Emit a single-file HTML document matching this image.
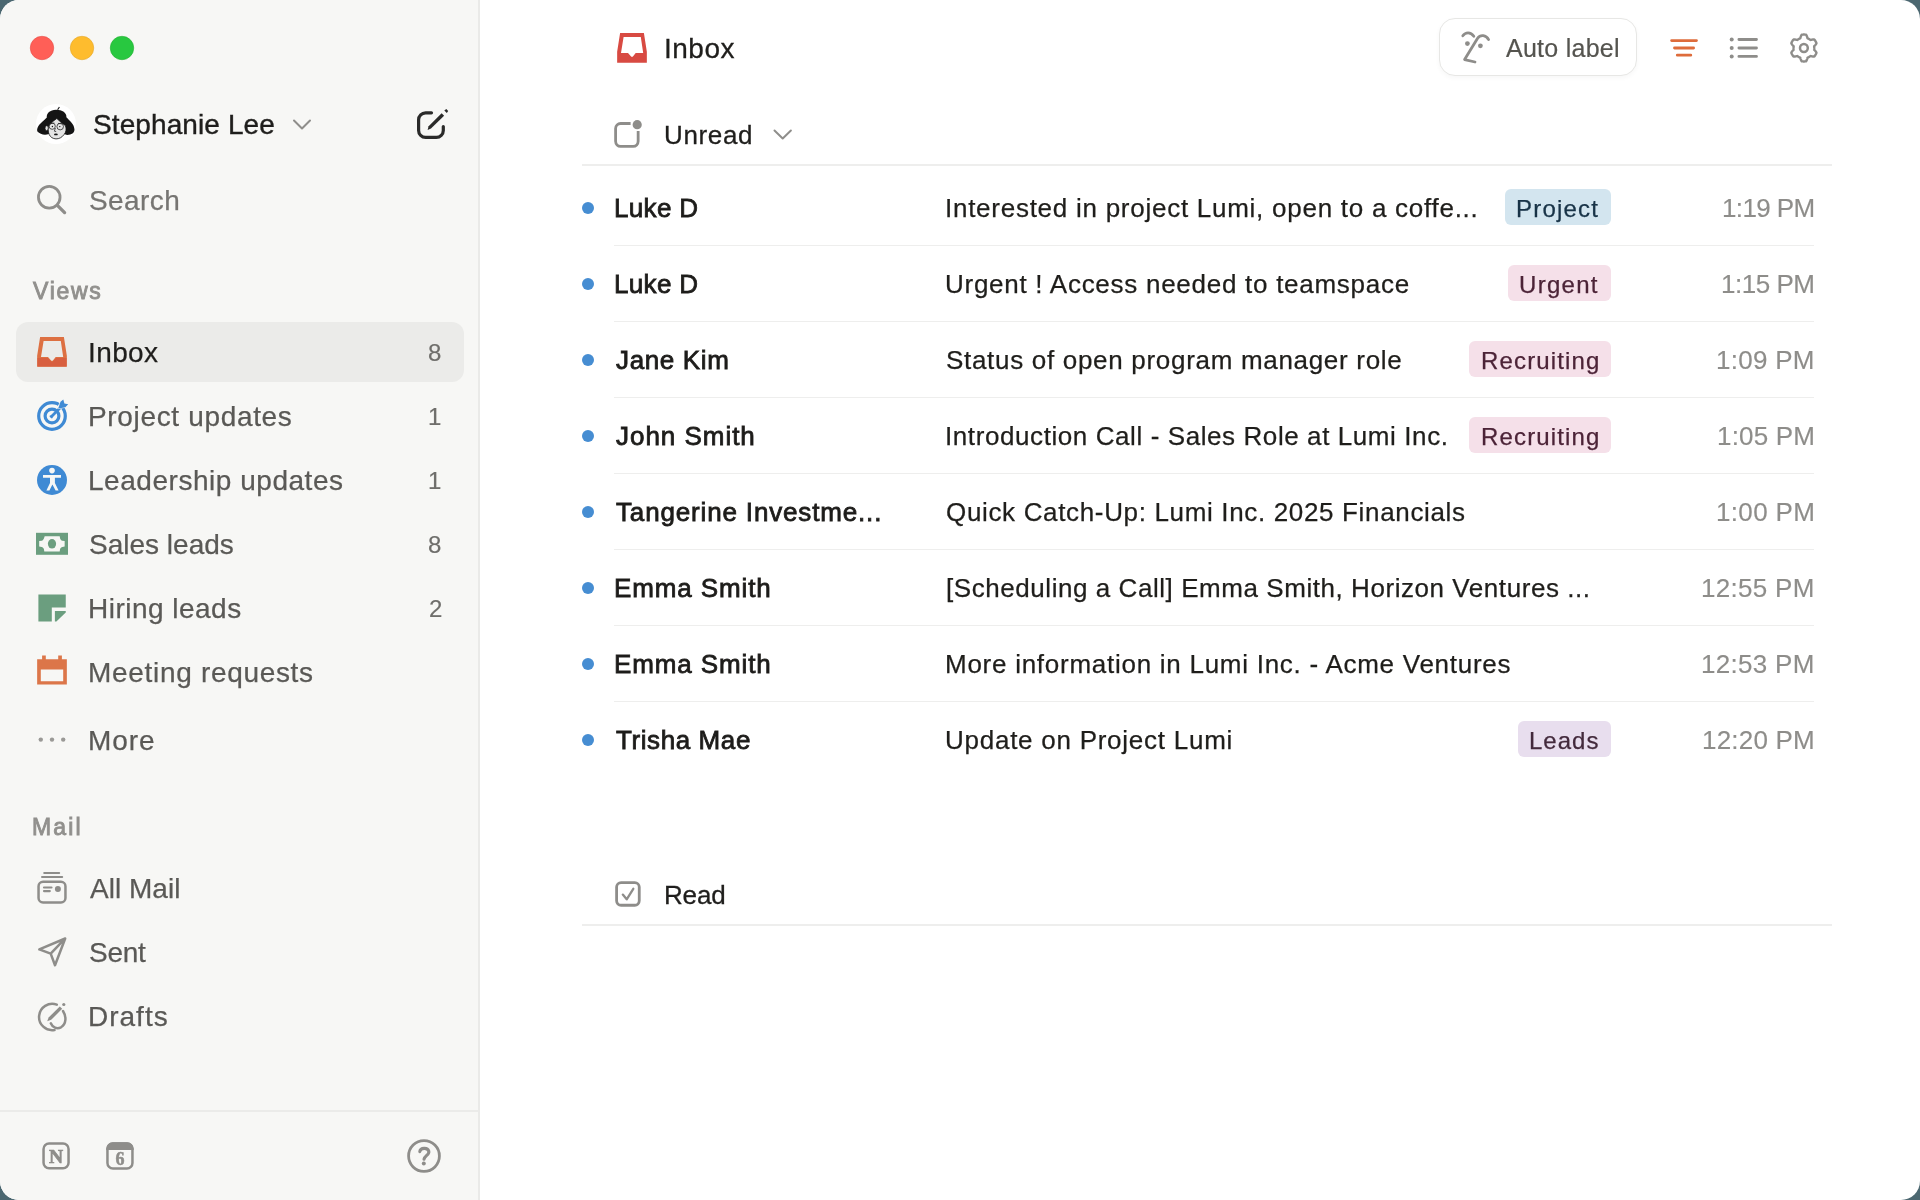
<!DOCTYPE html>
<html><head><meta charset="utf-8"><title>Inbox</title>
<style>
html,body{margin:0;padding:0;width:1920px;height:1200px;overflow:hidden;background:#4b6770;}
#win{position:absolute;left:0;top:0;width:1920px;height:1200px;border-radius:19px;overflow:hidden;background:#ffffff;}
#side{position:absolute;left:0;top:0;width:478px;height:1200px;background:#f7f7f5;border-right:2px solid #eaeae8;}
#sel{position:absolute;left:16px;top:322px;width:448px;height:60px;border-radius:12px;background:#ebebe9;}
#sidediv{position:absolute;left:0;top:1110px;width:478px;height:2px;background:#ebebe9;}
.t{position:absolute;font-family:"Liberation Sans",sans-serif;white-space:nowrap;will-change:transform;}
.hr{position:absolute;height:1px;background:#eeeeed;}
.hr2{position:absolute;height:2px;background:#eeeeed;}
.tag{position:absolute;height:36px;border-radius:6px;}
#autobtn{position:absolute;left:1439px;top:18px;width:196px;height:56px;border:1.5px solid #e7e7e5;border-radius:16px;background:#fff;box-shadow:0 2px 5px rgba(0,0,0,0.035);}
svg#icons{position:absolute;left:0;top:0;width:1920px;height:1200px;overflow:visible;will-change:transform;}

</style></head>
<body>
<div id="win">
<div id="side"></div>
<div id="sel"></div>
<div id="sidediv"></div>
<div class="tag" style="left:1505px;top:189px;width:106px;background:#d3e5ef"></div><div class="tag" style="left:1508px;top:265px;width:103px;background:#f5e0e9"></div><div class="tag" style="left:1469px;top:341px;width:142px;background:#f5e0e9"></div><div class="tag" style="left:1469px;top:417px;width:142px;background:#f5e0e9"></div><div class="tag" style="left:1518px;top:721px;width:93px;background:#e8deee"></div>
<div class="hr2" style="left:582px;top:164px;width:1250px"></div>
<div class="hr" style="left:614px;top:245px;width:1200px"></div><div class="hr" style="left:614px;top:321px;width:1200px"></div><div class="hr" style="left:614px;top:397px;width:1200px"></div><div class="hr" style="left:614px;top:473px;width:1200px"></div><div class="hr" style="left:614px;top:549px;width:1200px"></div><div class="hr" style="left:614px;top:625px;width:1200px"></div><div class="hr" style="left:614px;top:701px;width:1200px"></div>
<div class="hr2" style="left:582px;top:924px;width:1250px"></div>
<div id="autobtn"></div>
<svg id="icons" width="1920" height="1200" viewBox="0 0 1920 1200">
<!-- traffic lights -->
<circle cx="42" cy="48" r="11.75" fill="#ff5f57" stroke="#e0443e" stroke-width="0.5"/>
<circle cx="82" cy="48" r="11.75" fill="#febc2e" stroke="#dea123" stroke-width="0.5"/>
<circle cx="122" cy="48" r="11.75" fill="#28c840" stroke="#1aab29" stroke-width="0.5"/>
<!-- avatar -->
<circle cx="56" cy="124" r="20" fill="#ffffff"/>
<g transform="translate(32,100) scale(0.04)">
<path d="M370,440 C360,330 450,250 600,245 C760,245 870,320 860,430 C940,520 1060,600 1062,740 C1062,830 990,872 880,872 L800,850 L420,850 C330,885 200,865 135,790 C105,700 180,600 300,505 Z" fill="#141414"/>
<path d="M640,245 L685,175" stroke="#141414" stroke-width="28" fill="none"/>
<ellipse cx="368" cy="705" rx="42" ry="62" fill="#e4e4e4" stroke="#141414" stroke-width="18"/>
<path d="M425,640 C480,560 560,505 620,462 C680,520 760,590 835,640 C865,720 855,800 805,860 C745,940 680,972 600,972 C520,968 460,930 428,860 C398,790 398,700 425,640 Z" fill="#e4e4e4" stroke="#141414" stroke-width="20"/>
<g fill="none" stroke="#2a2a2a" stroke-width="20">
<circle cx="505" cy="655" r="78"/><circle cx="705" cy="665" r="82"/>
<path d="M455,590 L560,575 M650,585 L760,595"/>
<path d="M585,700 L560,780 L605,790"/>
</g>
<circle cx="510" cy="662" r="18" fill="#141414"/><circle cx="695" cy="665" r="18" fill="#141414"/>
<ellipse cx="598" cy="860" rx="48" ry="22" fill="#141414"/>
</g>
<!-- name chevron -->
<path d="M294,120.5 L302,128.5 L310,120.5" fill="none" stroke="#8f8e8b" stroke-width="2" stroke-linecap="round" stroke-linejoin="round"/>
<!-- compose -->
<path d="M431.5,112.8 H425.6 A7,7 0 0 0 418.6,119.8 V130.4 A7,7 0 0 0 425.6,137.4 H436.3 A7,7 0 0 0 443.3,130.4 V126.5" fill="none" stroke="#2a2a29" stroke-width="3.2" stroke-linecap="round"/>
<path d="M441.6,113.2 L444.1,115.7 L431,128.6 L427.6,130 L428.6,126.3 Z" fill="#2a2a29"/>
<path d="M444.3,110.5 L446.3,109 L448.2,111 L446.8,113 Z" fill="#2a2a29"/>
<!-- search -->
<circle cx="49.25" cy="197.25" r="10.8" fill="none" stroke="#8e8d8a" stroke-width="2.8"/>
<path d="M57.6,205.6 L64.6,212.6" stroke="#8e8d8a" stroke-width="3.3" stroke-linecap="round"/>
<!-- sidebar inbox (orange) -->
<path fill-rule="evenodd" fill="#dd7042" d="M40.1,337 H63.9 L66.85,355.7 V366.8 H37.15 V355.7 Z M43.6,341 L41,357 H48 L51.3,360.8 H52.7 L55.7,357 H63.2 L60.8,341 Z"/>
<path fill="#d85f40" d="M37.5,358 H47.8 L51.3,361.8 H52.7 L56.2,358 H66.5 V366.5 H37.5 Z"/>
<!-- project updates target -->
<g fill="none" stroke="#3f8ad4" stroke-width="3.2">
<circle cx="52" cy="416" r="13.3"/>
<circle cx="52" cy="416" r="6.9"/>
</g>
<path d="M60.5,406 L63.5,403" stroke="#f7f7f5" stroke-width="5" stroke-linecap="round"/>
<path d="M51.5,416.5 L61,407" stroke="#3f8ad4" stroke-width="2.8" stroke-linecap="round"/>
<path d="M49.2,416 L52,418.8 L54,414 Z" fill="#3f8ad4"/>
<path d="M58.2,408.6 L60.5,401.8 L63.3,399.6 L64.4,403.4 L68.2,404.3 L65.4,407.3 Z" fill="#3f8ad4" stroke="#f7f7f5" stroke-width="0.9" paint-order="stroke"/>
<!-- leadership -->
<circle cx="52" cy="480" r="15" fill="#3f8ad4"/>
<circle cx="52" cy="470.6" r="2.8" fill="#f7f7f5"/>
<path d="M43,475 H61 V477.8 H54.9 V483 L58.6,490.6 H55.6 L52.4,484.6 L49.4,490.6 H46.4 L50,483 V477.8 H43 Z" fill="#f7f7f5"/>
<!-- sales leads -->
<rect x="36" y="532.8" width="32" height="22" fill="#6b9e7f"/>
<path fill="#f7f7f5" d="M44.7,536.3 H59.7 L60.1,538.5 C60.6,539.8 61.3,540.5 62.3,540.7 L64.65,541.1 V546.4 L62.3,546.9 C61.3,547.1 60.6,547.8 60.1,549.1 L59.7,551.5 H44.3 L43.9,549.1 C43.4,547.8 42.7,547.1 41.7,546.9 L39.2,546.4 V541.1 L41.7,540.7 C42.7,540.5 43.4,539.8 43.9,538.5 Z"/>
<ellipse cx="52" cy="543.8" rx="4.1" ry="4.8" fill="#6b9e7f"/>
<!-- hiring leads -->
<path d="M38.4,594.4 H65.75 V607.6 H51.8 V621.6 H38.4 Z" fill="#6b9e7f"/>
<path d="M54.9,610.9 H65.75 V612.4 L56.4,621.6 H54.9 Z" fill="#6b9e7f"/>
<!-- meeting requests -->
<path fill-rule="evenodd" fill="#dc7649" d="M37.15,659.35 H42.1 V655.5 H45.8 V659.35 H58.2 V655.5 H61.9 V659.35 H66.85 V684.5 H37.15 Z M40.8,669.4 V681.2 H63.2 V669.4 Z"/>
<!-- more dots -->
<g fill="#9a9996"><circle cx="40.8" cy="739.6" r="2.2"/><circle cx="52" cy="739.6" r="2.2"/><circle cx="63.2" cy="739.6" r="2.2"/></g>
<!-- all mail -->
<g fill="none" stroke="#8e8d8a" stroke-linecap="round">
<path d="M44.2,873 H59.2" stroke-width="2"/>
<path d="M42,877 H62.2" stroke-width="2"/>
<rect x="38.55" y="881.75" width="26.9" height="20.8" rx="4.5" stroke-width="2.5"/>
<path d="M44,887.5 H51.5 M44,891.1 H49.8" stroke-width="2.2"/>
</g>
<circle cx="57.9" cy="889.1" r="3" fill="#8e8d8a"/>
<!-- sent -->
<path d="M65.2,938.5 L39.3,949.4 L50.7,953.6 L55,965.2 Z M50.7,953.6 L64.5,939.2" fill="none" stroke="#8e8d8a" stroke-width="2.5" stroke-linejoin="round" stroke-linecap="round"/>
<!-- drafts -->
<path d="M56.8,1004.6 A13.2,13.2 0 1 0 54.5,1030" fill="none" stroke="#8e8d8a" stroke-width="2.5" stroke-linecap="round"/>
<path d="M63,1011 C66.5,1016.5 66.5,1024 61,1027.3 C57,1029.5 52.5,1027.5 50.8,1023.3" fill="none" stroke="#8e8d8a" stroke-width="2.5" stroke-linecap="round"/>
<path d="M59.8,1006.4 L62.2,1008.8 L51.2,1019.8 L47.2,1021.2 L48.6,1017.4 Z" fill="#8e8d8a"/>
<circle cx="63.8" cy="1004.5" r="1.6" fill="#8e8d8a"/>
<!-- sidebar bottom icons -->
<rect x="43.55" y="1143.55" width="25" height="24.7" rx="5.5" fill="none" stroke="#8e8d8a" stroke-width="2.5"/>
<text x="56.1" y="1163.2" font-family="Liberation Serif" font-weight="bold" font-size="19.5" text-anchor="middle" fill="#8e8d8a" stroke="#8e8d8a" stroke-width="0.7">N</text>
<rect x="107.45" y="1143.55" width="25" height="25" rx="5.5" fill="none" stroke="#8e8d8a" stroke-width="2.5"/>
<path d="M106.2,1150 V1148.6 A6.3,6.3 0 0 1 112.5,1142.3 H127.4 A6.3,6.3 0 0 1 133.7,1148.6 V1150 Z" fill="#8e8d8a"/>
<text x="120" y="1164.6" font-family="Liberation Serif" font-weight="bold" font-size="18" text-anchor="middle" fill="#8e8d8a" stroke="#8e8d8a" stroke-width="0.5">6</text>
<circle cx="424" cy="1156" r="15.4" fill="none" stroke="#8e8d8a" stroke-width="2.8"/>
<path d="M419.8,1151.6 C420.5,1147.6 427.6,1147.2 428.8,1151.3 C429.6,1154.8 424.6,1155.5 424,1159.3" fill="none" stroke="#8e8d8a" stroke-width="3.1" stroke-linecap="round"/>
<circle cx="423.8" cy="1163.6" r="2" fill="#8e8d8a"/>
<!-- main header inbox (red) -->
<path fill-rule="evenodd" fill="#d84a42" d="M620.1,33 H643.9 L646.85,51.7 V62.8 H617.15 V51.7 Z M623.6,37 L621,53 H628 L631.3,56.8 H632.7 L635.7,53 H643.2 L640.8,37 Z"/>
<!-- auto label icon -->
<g fill="none" stroke="#8e8d8a" stroke-width="2.8" stroke-linecap="round" stroke-linejoin="round">
<path d="M1462.8,35.8 C1465.5,32 1470.5,31.5 1473.8,36.3"/>
<path d="M1488.6,39.6 C1486,34.8 1480.5,34.2 1477.6,38.2 L1464.6,59.6 L1475,62"/>
</g>
<circle cx="1467.4" cy="43.6" r="2.4" fill="#8e8d8a"/>
<circle cx="1480.4" cy="45.8" r="2.4" fill="#8e8d8a"/>
<!-- filter -->
<g stroke="#de6c3b" stroke-width="2.8" stroke-linecap="round">
<path d="M1671.6,40.6 H1696.5 M1674.5,48 H1693.6 M1677.3,55.2 H1690.8"/>
</g>
<!-- list -->
<g fill="#8e8d8a"><circle cx="1731.7" cy="39.5" r="2"/><circle cx="1731.7" cy="48" r="2"/><circle cx="1731.7" cy="56.4" r="2"/></g>
<path d="M1738.9,39.5 H1756.5 M1738.9,48 H1756.5 M1738.9,56.4 H1756.5" stroke="#8e8d8a" stroke-width="2.8" stroke-linecap="round"/>
<!-- gear -->
<path d="M1814.25,48.00 L1814.25,48.18 L1814.24,48.36 L1814.24,48.54 L1814.22,48.72 L1814.21,48.90 L1814.19,49.08 L1814.17,49.26 L1814.15,49.44 L1814.12,49.62 L1814.25,49.82 L1814.47,50.05 L1814.70,50.29 L1814.93,50.55 L1815.16,50.81 L1815.39,51.08 L1815.62,51.36 L1815.83,51.65 L1816.04,51.94 L1816.22,52.24 L1816.39,52.55 L1816.46,52.82 L1816.37,53.04 L1816.28,53.26 L1816.19,53.47 L1816.09,53.68 L1815.99,53.90 L1815.88,54.11 L1815.78,54.31 L1815.66,54.52 L1815.55,54.73 L1815.43,54.93 L1815.31,55.13 L1815.18,55.33 L1815.05,55.52 L1814.92,55.71 L1814.78,55.91 L1814.64,56.09 L1814.50,56.28 L1814.35,56.46 L1814.08,56.55 L1813.74,56.55 L1813.38,56.54 L1813.03,56.51 L1812.67,56.47 L1812.31,56.41 L1811.96,56.35 L1811.62,56.28 L1811.29,56.20 L1810.96,56.12 L1810.65,56.05 L1810.41,56.04 L1810.27,56.16 L1810.13,56.27 L1809.98,56.37 L1809.84,56.48 L1809.69,56.58 L1809.54,56.68 L1809.38,56.78 L1809.23,56.87 L1809.08,56.96 L1808.92,57.05 L1808.76,57.14 L1808.60,57.22 L1808.44,57.30 L1808.27,57.38 L1808.11,57.46 L1807.94,57.53 L1807.78,57.60 L1807.61,57.66 L1807.49,57.87 L1807.40,58.18 L1807.31,58.50 L1807.21,58.83 L1807.10,59.16 L1806.98,59.49 L1806.85,59.83 L1806.71,60.16 L1806.55,60.48 L1806.39,60.80 L1806.21,61.09 L1806.00,61.28 L1805.77,61.32 L1805.54,61.35 L1805.31,61.38 L1805.07,61.40 L1804.84,61.42 L1804.60,61.43 L1804.37,61.44 L1804.13,61.45 L1803.90,61.45 L1803.67,61.45 L1803.43,61.44 L1803.20,61.43 L1802.96,61.42 L1802.73,61.40 L1802.49,61.38 L1802.26,61.35 L1802.03,61.32 L1801.80,61.28 L1801.59,61.09 L1801.41,60.80 L1801.25,60.48 L1801.09,60.16 L1800.95,59.83 L1800.82,59.49 L1800.70,59.16 L1800.59,58.83 L1800.49,58.50 L1800.40,58.18 L1800.31,57.87 L1800.19,57.66 L1800.02,57.60 L1799.86,57.53 L1799.69,57.46 L1799.53,57.38 L1799.36,57.30 L1799.20,57.22 L1799.04,57.14 L1798.88,57.05 L1798.73,56.96 L1798.57,56.87 L1798.42,56.78 L1798.26,56.68 L1798.11,56.58 L1797.96,56.48 L1797.82,56.37 L1797.67,56.27 L1797.53,56.16 L1797.39,56.04 L1797.15,56.05 L1796.84,56.12 L1796.51,56.20 L1796.18,56.28 L1795.84,56.35 L1795.49,56.41 L1795.13,56.47 L1794.77,56.51 L1794.42,56.54 L1794.06,56.55 L1793.72,56.55 L1793.45,56.46 L1793.30,56.28 L1793.16,56.09 L1793.02,55.91 L1792.88,55.71 L1792.75,55.52 L1792.62,55.33 L1792.49,55.13 L1792.37,54.93 L1792.25,54.73 L1792.14,54.52 L1792.02,54.31 L1791.92,54.11 L1791.81,53.90 L1791.71,53.68 L1791.61,53.47 L1791.52,53.26 L1791.43,53.04 L1791.34,52.82 L1791.41,52.55 L1791.58,52.24 L1791.76,51.94 L1791.97,51.65 L1792.18,51.36 L1792.41,51.08 L1792.64,50.81 L1792.87,50.55 L1793.10,50.29 L1793.33,50.05 L1793.55,49.82 L1793.68,49.62 L1793.65,49.44 L1793.63,49.26 L1793.61,49.08 L1793.59,48.90 L1793.58,48.72 L1793.56,48.54 L1793.56,48.36 L1793.55,48.18 L1793.55,48.00 L1793.55,47.82 L1793.56,47.64 L1793.56,47.46 L1793.58,47.28 L1793.59,47.10 L1793.61,46.92 L1793.63,46.74 L1793.65,46.56 L1793.68,46.38 L1793.55,46.18 L1793.33,45.95 L1793.10,45.71 L1792.87,45.45 L1792.64,45.19 L1792.41,44.92 L1792.18,44.64 L1791.97,44.35 L1791.76,44.06 L1791.58,43.76 L1791.41,43.45 L1791.34,43.18 L1791.43,42.96 L1791.52,42.74 L1791.61,42.53 L1791.71,42.32 L1791.81,42.10 L1791.92,41.89 L1792.02,41.69 L1792.14,41.48 L1792.25,41.27 L1792.37,41.07 L1792.49,40.87 L1792.62,40.67 L1792.75,40.48 L1792.88,40.29 L1793.02,40.09 L1793.16,39.91 L1793.30,39.72 L1793.45,39.54 L1793.72,39.45 L1794.06,39.45 L1794.42,39.46 L1794.77,39.49 L1795.13,39.53 L1795.49,39.59 L1795.84,39.65 L1796.18,39.72 L1796.51,39.80 L1796.84,39.88 L1797.15,39.95 L1797.39,39.96 L1797.53,39.84 L1797.67,39.73 L1797.82,39.63 L1797.96,39.52 L1798.11,39.42 L1798.26,39.32 L1798.42,39.22 L1798.57,39.13 L1798.73,39.04 L1798.88,38.95 L1799.04,38.86 L1799.20,38.78 L1799.36,38.70 L1799.53,38.62 L1799.69,38.54 L1799.86,38.47 L1800.02,38.40 L1800.19,38.34 L1800.31,38.13 L1800.40,37.82 L1800.49,37.50 L1800.59,37.17 L1800.70,36.84 L1800.82,36.51 L1800.95,36.17 L1801.09,35.84 L1801.25,35.52 L1801.41,35.20 L1801.59,34.91 L1801.80,34.72 L1802.03,34.68 L1802.26,34.65 L1802.49,34.62 L1802.73,34.60 L1802.96,34.58 L1803.20,34.57 L1803.43,34.56 L1803.67,34.55 L1803.90,34.55 L1804.13,34.55 L1804.37,34.56 L1804.60,34.57 L1804.84,34.58 L1805.07,34.60 L1805.31,34.62 L1805.54,34.65 L1805.77,34.68 L1806.00,34.72 L1806.21,34.91 L1806.39,35.20 L1806.55,35.52 L1806.71,35.84 L1806.85,36.17 L1806.98,36.51 L1807.10,36.84 L1807.21,37.17 L1807.31,37.50 L1807.40,37.82 L1807.49,38.13 L1807.61,38.34 L1807.78,38.40 L1807.94,38.47 L1808.11,38.54 L1808.27,38.62 L1808.44,38.70 L1808.60,38.78 L1808.76,38.86 L1808.92,38.95 L1809.08,39.04 L1809.23,39.13 L1809.38,39.22 L1809.54,39.32 L1809.69,39.42 L1809.84,39.52 L1809.98,39.63 L1810.13,39.73 L1810.27,39.84 L1810.41,39.96 L1810.65,39.95 L1810.96,39.88 L1811.29,39.80 L1811.62,39.72 L1811.96,39.65 L1812.31,39.59 L1812.67,39.53 L1813.03,39.49 L1813.38,39.46 L1813.74,39.45 L1814.08,39.45 L1814.35,39.54 L1814.50,39.72 L1814.64,39.91 L1814.78,40.09 L1814.92,40.29 L1815.05,40.48 L1815.18,40.67 L1815.31,40.87 L1815.43,41.07 L1815.55,41.27 L1815.66,41.48 L1815.78,41.69 L1815.88,41.89 L1815.99,42.10 L1816.09,42.32 L1816.19,42.53 L1816.28,42.74 L1816.37,42.96 L1816.46,43.18 L1816.39,43.45 L1816.22,43.76 L1816.04,44.06 L1815.83,44.35 L1815.62,44.64 L1815.39,44.92 L1815.16,45.19 L1814.93,45.45 L1814.70,45.71 L1814.47,45.95 L1814.25,46.18 L1814.12,46.38 L1814.15,46.56 L1814.17,46.74 L1814.19,46.92 L1814.21,47.10 L1814.22,47.28 L1814.24,47.46 L1814.24,47.64 L1814.25,47.82 Z" fill="none" stroke="#8e8d8a" stroke-width="2.4" stroke-linejoin="round"/>
<circle cx="1803.9" cy="48" r="3.9" fill="none" stroke="#8e8d8a" stroke-width="2.5"/>
<!-- unread icon -->
<path d="M630.6,123.5 H620.6 A5,5 0 0 0 615.6,128.5 V141.35 A5,5 0 0 0 620.6,146.35 H633.15 A5,5 0 0 0 638.15,141.35 V131" fill="none" stroke="#8e8d8a" stroke-width="2.8"/>
<circle cx="637.2" cy="124.65" r="4.6" fill="#8e8d8a"/>
<path d="M774.5,130.5 L782.7,138.5 L790.9,130.5" fill="none" stroke="#8f8e8b" stroke-width="2" stroke-linecap="round" stroke-linejoin="round"/>
<!-- read icon -->
<rect x="616.6" y="882.6" width="22.65" height="22.65" rx="4.5" fill="none" stroke="#8e8d8a" stroke-width="2.8"/>
<path d="M622.8,894.6 L626.7,899.3 L633.3,888.8" fill="none" stroke="#8e8d8a" stroke-width="2.3" stroke-linecap="round" stroke-linejoin="round"/>
<!-- unread dots -->
<g fill="#468dd2">
<circle cx="588" cy="208" r="6"/><circle cx="588" cy="284" r="6"/><circle cx="588" cy="360" r="6"/><circle cx="588" cy="436" r="6"/>
<circle cx="588" cy="512" r="6"/><circle cx="588" cy="588" r="6"/><circle cx="588" cy="664" r="6"/><circle cx="588" cy="740" r="6"/>
</g>
</svg>

<div class="t" style="left:92.80px;top:111px;font-size:28px;line-height:28px;color:#1f1e1c;letter-spacing:0.1px;-webkit-text-stroke:0.4px #1f1e1c">Stephanie Lee</div><div class="t" style="left:88.60px;top:187px;font-size:28px;line-height:28px;color:#767572;letter-spacing:0.4px;-webkit-text-stroke:0.25px #767572">Search</div><div class="t" style="left:32.80px;top:280px;font-size:23px;line-height:23px;color:#91908d;letter-spacing:1.7px;-webkit-text-stroke:0.9px #91908d">Views</div><div class="t" style="left:88.00px;top:339px;font-size:28px;line-height:28px;color:#1f1e1c;letter-spacing:0.387px;-webkit-text-stroke:0.25px #1f1e1c">Inbox</div><div class="t" style="left:427.50px;top:341px;font-size:24px;line-height:24px;color:#6f6e6b;letter-spacing:0px;-webkit-text-stroke:0.2px #6f6e6b">8</div><div class="t" style="left:88.00px;top:403px;font-size:28px;line-height:28px;color:#5a5956;letter-spacing:0.664px;-webkit-text-stroke:0.25px #5a5956">Project updates</div><div class="t" style="left:427.50px;top:405px;font-size:24px;line-height:24px;color:#6f6e6b;letter-spacing:0px;-webkit-text-stroke:0.2px #6f6e6b">1</div><div class="t" style="left:88.00px;top:467px;font-size:28px;line-height:28px;color:#5a5956;letter-spacing:0.532px;-webkit-text-stroke:0.25px #5a5956">Leadership updates</div><div class="t" style="left:427.50px;top:469px;font-size:24px;line-height:24px;color:#6f6e6b;letter-spacing:0px;-webkit-text-stroke:0.2px #6f6e6b">1</div><div class="t" style="left:89.00px;top:531px;font-size:28px;line-height:28px;color:#5a5956;letter-spacing:0.005px;-webkit-text-stroke:0.25px #5a5956">Sales leads</div><div class="t" style="left:427.50px;top:533px;font-size:24px;line-height:24px;color:#6f6e6b;letter-spacing:0px;-webkit-text-stroke:0.2px #6f6e6b">8</div><div class="t" style="left:88.00px;top:595px;font-size:28px;line-height:28px;color:#5a5956;letter-spacing:0.482px;-webkit-text-stroke:0.25px #5a5956">Hiring leads</div><div class="t" style="left:428.50px;top:597px;font-size:24px;line-height:24px;color:#6f6e6b;letter-spacing:0px;-webkit-text-stroke:0.2px #6f6e6b">2</div><div class="t" style="left:88.00px;top:659px;font-size:28px;line-height:28px;color:#5a5956;letter-spacing:0.687px;-webkit-text-stroke:0.25px #5a5956">Meeting requests</div><div class="t" style="left:88.00px;top:727px;font-size:28px;line-height:28px;color:#5a5956;letter-spacing:0.933px;-webkit-text-stroke:0.25px #5a5956">More</div><div class="t" style="left:31.80px;top:816px;font-size:23px;line-height:23px;color:#91908d;letter-spacing:2.133px;-webkit-text-stroke:0.9px #91908d">Mail</div><div class="t" style="left:90.20px;top:875px;font-size:28px;line-height:28px;color:#5a5956;letter-spacing:0.029px;-webkit-text-stroke:0.25px #5a5956">All Mail</div><div class="t" style="left:89.20px;top:939px;font-size:28px;line-height:28px;color:#5a5956;letter-spacing:-0.233px;-webkit-text-stroke:0.25px #5a5956">Sent</div><div class="t" style="left:88.20px;top:1003px;font-size:28px;line-height:28px;color:#5a5956;letter-spacing:1.0px;-webkit-text-stroke:0.25px #5a5956">Drafts</div><div class="t" style="left:663.50px;top:35px;font-size:28px;line-height:28px;color:#1f1e1c;letter-spacing:0.5px;-webkit-text-stroke:0.3px #1f1e1c">Inbox</div><div class="t" style="left:1506.00px;top:36px;font-size:25px;line-height:25px;color:#55544f;letter-spacing:0.267px;-webkit-text-stroke:0.2px #55544f">Auto label</div><div class="t" style="left:664.00px;top:122px;font-size:26px;line-height:26px;color:#1f1e1c;letter-spacing:0.66px;-webkit-text-stroke:0.3px #1f1e1c">Unread</div><div class="t" style="left:664.00px;top:882px;font-size:26px;line-height:26px;color:#1f1e1c;letter-spacing:-0.167px;-webkit-text-stroke:0.3px #1f1e1c">Read</div><div class="t" style="left:614.00px;top:195px;font-size:26px;line-height:26px;color:#1d1c1a;letter-spacing:0.32px;-webkit-text-stroke:0.8px #1d1c1a">Luke D</div><div class="t" style="left:945.00px;top:195px;font-size:26px;line-height:26px;color:#1f1e1b;letter-spacing:0.738px;-webkit-text-stroke:0.25px #1f1e1b">Interested in project Lumi, open to a coffe...</div><div class="t" style="left:1516.00px;top:197px;font-size:24px;line-height:24px;color:#183347;letter-spacing:1.2px;-webkit-text-stroke:0.25px #183347">Project</div><div class="t" style="left:1721.50px;top:195px;font-size:26px;line-height:26px;color:#8e8d8a;letter-spacing:-0.6px;-webkit-text-stroke:0.15px #8e8d8a">1:19 PM</div><div class="t" style="left:614.00px;top:271px;font-size:26px;line-height:26px;color:#1d1c1a;letter-spacing:0.32px;-webkit-text-stroke:0.8px #1d1c1a">Luke D</div><div class="t" style="left:945.00px;top:271px;font-size:26px;line-height:26px;color:#1f1e1b;letter-spacing:0.729px;-webkit-text-stroke:0.25px #1f1e1b">Urgent ! Access needed to teamspace</div><div class="t" style="left:1519.00px;top:273px;font-size:24px;line-height:24px;color:#4c2337;letter-spacing:1.3px;-webkit-text-stroke:0.25px #4c2337">Urgent</div><div class="t" style="left:1720.50px;top:271px;font-size:26px;line-height:26px;color:#8e8d8a;letter-spacing:-0.467px;-webkit-text-stroke:0.15px #8e8d8a">1:15 PM</div><div class="t" style="left:616.00px;top:347px;font-size:26px;line-height:26px;color:#1d1c1a;letter-spacing:0.643px;-webkit-text-stroke:0.8px #1d1c1a">Jane Kim</div><div class="t" style="left:946.00px;top:347px;font-size:26px;line-height:26px;color:#1f1e1b;letter-spacing:0.694px;-webkit-text-stroke:0.25px #1f1e1b">Status of open program manager role</div><div class="t" style="left:1481.00px;top:349px;font-size:24px;line-height:24px;color:#4c2337;letter-spacing:1.156px;-webkit-text-stroke:0.25px #4c2337">Recruiting</div><div class="t" style="left:1715.50px;top:347px;font-size:26px;line-height:26px;color:#8e8d8a;letter-spacing:0.283px;-webkit-text-stroke:0.15px #8e8d8a">1:09 PM</div><div class="t" style="left:616.00px;top:423px;font-size:26px;line-height:26px;color:#1d1c1a;letter-spacing:0.972px;-webkit-text-stroke:0.8px #1d1c1a">John Smith</div><div class="t" style="left:945.00px;top:423px;font-size:26px;line-height:26px;color:#1f1e1b;letter-spacing:0.586px;-webkit-text-stroke:0.25px #1f1e1b">Introduction Call - Sales Role at Lumi Inc.</div><div class="t" style="left:1481.00px;top:425px;font-size:24px;line-height:24px;color:#4c2337;letter-spacing:1.156px;-webkit-text-stroke:0.25px #4c2337">Recruiting</div><div class="t" style="left:1716.50px;top:423px;font-size:26px;line-height:26px;color:#8e8d8a;letter-spacing:0.167px;-webkit-text-stroke:0.15px #8e8d8a">1:05 PM</div><div class="t" style="left:616.00px;top:499px;font-size:26px;line-height:26px;color:#1d1c1a;letter-spacing:0.84px;-webkit-text-stroke:0.8px #1d1c1a">Tangerine Investme...</div><div class="t" style="left:946.00px;top:499px;font-size:26px;line-height:26px;color:#1f1e1b;letter-spacing:0.657px;-webkit-text-stroke:0.25px #1f1e1b">Quick Catch-Up: Lumi Inc. 2025 Financials</div><div class="t" style="left:1715.50px;top:499px;font-size:26px;line-height:26px;color:#8e8d8a;letter-spacing:0.333px;-webkit-text-stroke:0.15px #8e8d8a">1:00 PM</div><div class="t" style="left:614.00px;top:575px;font-size:26px;line-height:26px;color:#1d1c1a;letter-spacing:0.878px;-webkit-text-stroke:0.8px #1d1c1a">Emma Smith</div><div class="t" style="left:946.00px;top:575px;font-size:26px;line-height:26px;color:#1f1e1b;letter-spacing:0.557px;-webkit-text-stroke:0.25px #1f1e1b">[Scheduling a Call] Emma Smith, Horizon Ventures ...</div><div class="t" style="left:1700.50px;top:575px;font-size:26px;line-height:26px;color:#8e8d8a;letter-spacing:0.286px;-webkit-text-stroke:0.15px #8e8d8a">12:55 PM</div><div class="t" style="left:614.00px;top:651px;font-size:26px;line-height:26px;color:#1d1c1a;letter-spacing:0.878px;-webkit-text-stroke:0.8px #1d1c1a">Emma Smith</div><div class="t" style="left:945.00px;top:651px;font-size:26px;line-height:26px;color:#1f1e1b;letter-spacing:0.734px;-webkit-text-stroke:0.25px #1f1e1b">More information in Lumi Inc. - Acme Ventures</div><div class="t" style="left:1700.50px;top:651px;font-size:26px;line-height:26px;color:#8e8d8a;letter-spacing:0.286px;-webkit-text-stroke:0.15px #8e8d8a">12:53 PM</div><div class="t" style="left:616.00px;top:727px;font-size:26px;line-height:26px;color:#1d1c1a;letter-spacing:0.589px;-webkit-text-stroke:0.8px #1d1c1a">Trisha Mae</div><div class="t" style="left:945.00px;top:727px;font-size:26px;line-height:26px;color:#1f1e1b;letter-spacing:0.743px;-webkit-text-stroke:0.25px #1f1e1b">Update on Project Lumi</div><div class="t" style="left:1529.00px;top:729px;font-size:24px;line-height:24px;color:#432a3c;letter-spacing:1.0px;-webkit-text-stroke:0.25px #432a3c">Leads</div><div class="t" style="left:1701.50px;top:727px;font-size:26px;line-height:26px;color:#8e8d8a;letter-spacing:0.2px;-webkit-text-stroke:0.15px #8e8d8a">12:20 PM</div>
</div>
</body></html>
